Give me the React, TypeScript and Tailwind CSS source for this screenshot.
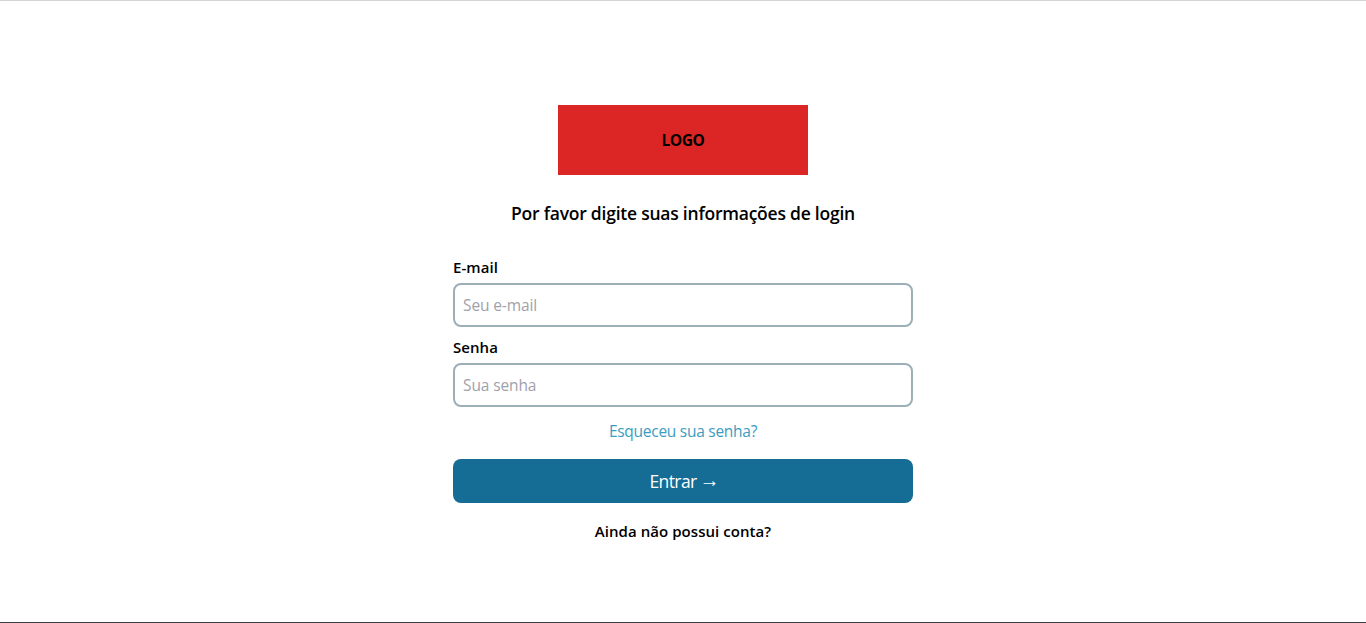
function Field({ label, type, placeholder }: { label: string; type: string; placeholder: string }) {
  return (
    <label className="flex flex-col gap-1 text-[15px] leading-6 font-semibold">
      <span className="tracking-[0.05px]">{label}</span>
      <input
        type={type}
        placeholder={placeholder}
        className="h-11 w-full rounded-lg border-2 border-[#9cafb7] px-2 text-[15.5px] font-normal tracking-[-0.12px] placeholder:text-[#a1a1aa]"
      />
    </label>
  );
}

export default function App() {
  return (
    <main className="flex h-[623px] flex-col items-center border-t border-b border-t-[#d5d5d5] border-b-[#3b4043] bg-white pt-[104px] font-['Open_Sans',sans-serif] text-black">
      <div className="flex h-[70px] w-[250px] items-center justify-center bg-[#dc2626] pt-0.5 text-[15.5px] font-bold tracking-[-0.4px]">LOGO</div>
      <h1 className="mt-6 text-[17.5px] leading-7 font-semibold tracking-[-0.23px]">Por favor digite suas informações de login</h1>
      <form className="mt-7 flex w-[460px] flex-col">
        <div className="flex flex-col gap-2">
          <Field label="E-mail" type="email" placeholder="Seu e-mail" />
          <Field label="Senha" type="password" placeholder="Sua senha" />
        </div>
        <a className="mt-3 self-center text-[15.5px] leading-6 tracking-[-0.27px] text-[#3a9cc0]">Esqueceu sua senha?</a>
        <button type="button" className="mt-4 flex h-11 items-center justify-center gap-[3px] rounded-lg bg-[#156c95] pl-[3px] text-[17.5px] tracking-[-0.6px] text-white">
          Entrar <span className="-mt-[3px] font-['Liberation_Sans',sans-serif] text-xl leading-7 tracking-normal">→</span>
        </button>
      </form>
      <p className="mt-4 text-[15px] leading-6 font-semibold tracking-[0.06px]">Ainda não possui conta?</p>
    </main>
  );
}
